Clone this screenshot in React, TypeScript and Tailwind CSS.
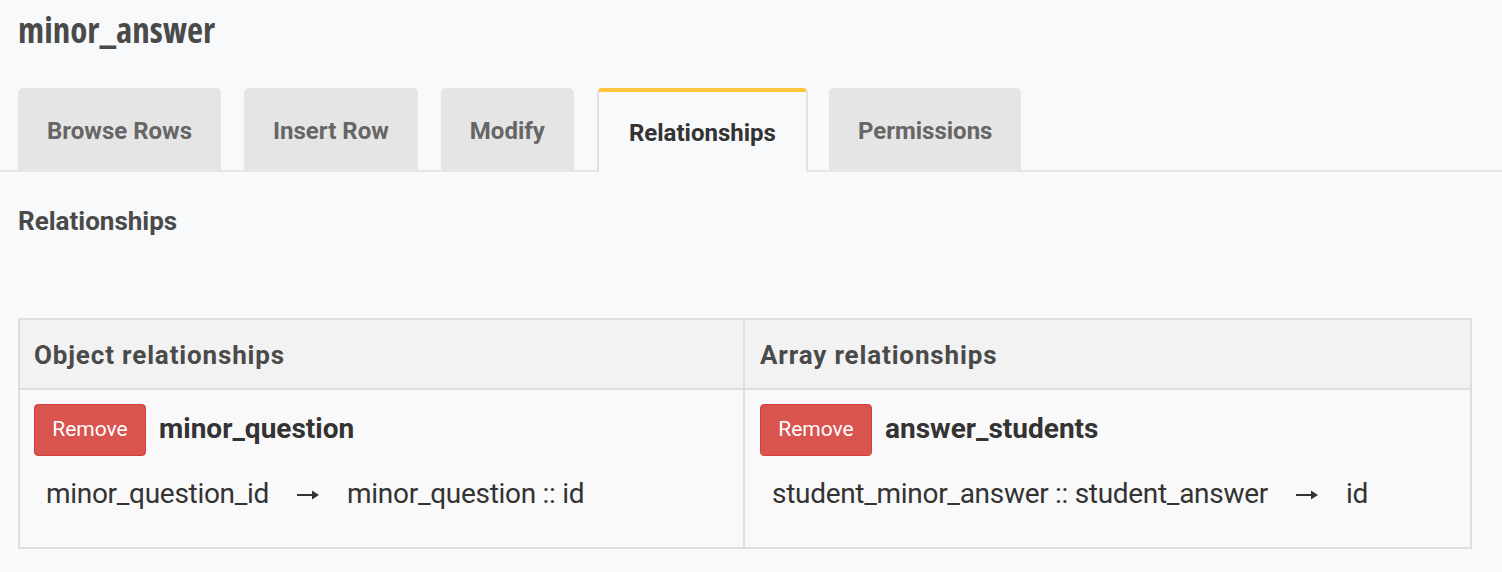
import React from "react";

function Arrow() {
  return (
    <svg width="22" height="12" viewBox="0 0 22 12" className="shrink-0 text-[#333]" aria-hidden="true">
      <line x1="0" y1="6" x2="16" y2="6" stroke="currentColor" strokeWidth="2" />
      <path d="M15 1.5 L22 6 L15 10.5 Z" fill="currentColor" />
    </svg>
  );
}

const tabs = ["Browse Rows", "Insert Row", "Modify", "Relationships", "Permissions"];

function RelCell({ name, from, to, pad }: { name: string; from: string; to: string; pad: string }) {
  return (
    <div className={`${pad} pt-[14px] h-[157px]`}>
      <div className="flex items-center">
        <button className="h-[52px] w-[112px] rounded-[4px] border border-[#d43f3a] bg-[#d9534f] pb-[2px] text-[21px] text-white leading-none">
          Remove
        </button>
        <span className="ml-[13px] pb-[2px] text-[28px] font-bold text-[#333] leading-none">{name}</span>
      </div>
      <div className="mt-[24px] ml-[12px] flex items-center text-[28px] tracking-[-0.3px] leading-none text-[#333]">
        <span>{from}</span>
        <span className="mx-[28px] flex items-center pt-[2px]">
          <Arrow />
        </span>
        <span>{to}</span>
      </div>
    </div>
  );
}

export default function App() {
  return (
    <div className="min-h-screen w-[1502px] bg-[#f8f9fa] font-['Roboto',sans-serif] text-[#333]">
      <div className="pl-[18px] pt-[8px]">
        <h2 className="font-['Open_Sans',sans-serif] text-[35px] leading-[44px] font-bold font-stretch-75% text-[#4a4a4a]">
          minor_answer
        </h2>
      </div>

      <div className="mt-[36px] flex border-b-2 border-[#e6e6e6] pl-[18px]">
        {tabs.map((t) =>
          t === "Relationships" ? (
            <div
              key={t}
              className="-mb-[2px] mr-[21px] flex h-[84px] items-center rounded-t-[5px] border-x-2 border-t-4 border-x-[#e2e2e2] border-t-[#fec53d] bg-[#f8f9fa] px-[30px] pt-[1px] text-[24px] font-bold text-[#333]"
            >
              {t}
            </div>
          ) : (
            <div
              key={t}
              className="mr-[23px] flex h-[82px] items-center rounded-t-[5px] bg-[#e5e5e5] px-[29px] pt-[4px] text-[24px] font-bold text-[#666]"
            >
              {t}
            </div>
          )
        )}
      </div>

      <div className="pl-[18px] mt-[36px] text-[26px] leading-none font-bold text-[#4a4a4a]">Relationships</div>

      <div className="ml-[18px] mt-[84px] w-[1454px] border-2 border-[#dedede]">
        <div className="grid grid-cols-2 bg-[#f2f2f2] border-b-2 border-[#dedede]">
          <div className="flex h-[68px] items-center border-r-2 border-[#dedede] pl-[14px] pt-[2px] text-[26px] tracking-[0.85px] leading-none font-bold text-[#4a4a4a]">
            Object relationships
          </div>
          <div className="flex h-[68px] items-center pl-[15px] pt-[2px] text-[26px] tracking-[0.85px] leading-none font-bold text-[#4a4a4a]">
            Array relationships
          </div>
        </div>
        <div className="grid grid-cols-2 bg-[#f9f9f9]">
          <div className="border-r-2 border-[#dedede]">
            <RelCell pad="pl-[14px]" name="minor_question" from="minor_question_id" to="minor_question :: id" />
          </div>
          <div>
            <RelCell pad="pl-[15px]" name="answer_students" from="student_minor_answer :: student_answer" to="id" />
          </div>
        </div>
      </div>
    </div>
  );
}
